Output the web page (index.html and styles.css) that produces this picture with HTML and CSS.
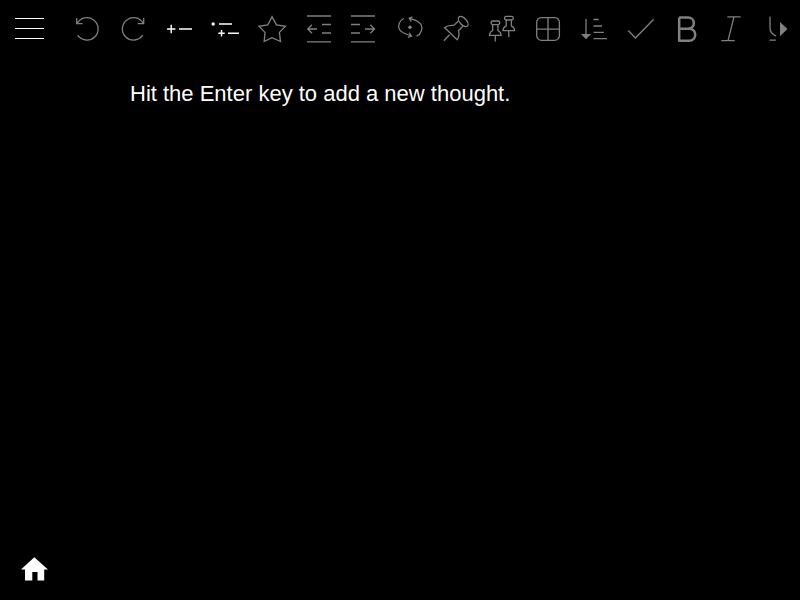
FILE: index.html
```html
<!DOCTYPE html>
<html lang="en">
<head>
<meta charset="utf-8">
<title>Thoughts</title>
<link rel="stylesheet" href="styles.css">
</head>
<body>
<header class="header">
  <svg class="menu" viewBox="0 0 64 60"><path d="M15 18.5H44M15 28.5H44M15 38.5H44"/></svg>
  <nav class="toolbar">
    <svg class="tool" viewBox="64 0 46 60"><path d="M77 23.7A11.2 11.2 0 1 1 77.7 35.2M76.7 18V23.7H82.5"/></svg>
    <svg class="tool" viewBox="110 0 46 60"><path d="M143.5 23.7A11.2 11.2 0 1 0 142.8 35.2M143.7 18V23.7H137.7"/></svg>
    <svg class="tool active" viewBox="156 0 46 60"><path d="M167 29H175.4M171.2 24.8V33.2M179 29H192"/></svg>
    <svg class="tool active" viewBox="202 0 46 60"><circle class="solid" cx="213.2" cy="24" r="1.7"/><path d="M219 24H232M218.3 33.3H224.7M221.5 30V36.6M228 33.3H239"/></svg>
    <svg class="tool" viewBox="248 0 46 60"><path d="M272 16.6L276.4 24.8L285.5 26.3L279.4 32.4L280.5 41.5L272 37.7L264.2 41.5L265 32.4L259 26.3L267.8 24.8Z"/></svg>
    <svg class="tool" viewBox="294 0 46 60"><path d="M307 16H331M307 41.8H331M322 24.5H331M322 33H331M317 29H307.8M312 24.8L307.8 29L312 33.2"/></svg>
    <svg class="tool" viewBox="340 0 46 60"><path d="M351 16H375M351 41.8H375M351 24.5H360M351 33H360M365 29H374.5M370.3 24.8L374.5 29L370.3 33.2"/></svg>
    <svg class="tool" viewBox="386 0 46 60"><circle class="solid" cx="410" cy="27.3" r="1.8"/><path d="M404 18.5C399 20.5 397.5 26 399.5 29.5C401.5 33 406 34.2 411.3 36M409.3 32.8L411.5 36.1L408 37.4M416.5 36.2C421.3 34 423.2 28.5 421 24.5C418.7 20.5 414 19.5 409.5 18.2M412.5 16.8L409.2 18.2L411.3 21.3"/></svg>
    <svg class="tool" viewBox="432 0 46 60"><ellipse cx="463.2" cy="21.5" rx="6.2" ry="3.3" transform="rotate(47 463.2 21.5)"/><path d="M458.4 21L453.8 25.4C450.3 25 447.1 25.4 444.6 27.8C448.8 31 452.8 36.3 457.3 39.7C459.1 37 459.4 34 458.6 30.5L463 26.2M449.6 34.8L443.8 40.7"/></svg>
    <svg class="tool" viewBox="478 0 46 60">
      <g id="push-pin"><rect x="491" y="21" width="8.8" height="3.6" rx="1.8"/><path d="M492.7 24.6V30.5C490.8 31.4 489.5 32.8 489.5 35.3H501.1C501.1 32.8 499.8 31.4 497.9 30.5V24.6M495.3 35.3V41.5"/></g>
      <use href="#push-pin" x="13.5" y="-4.6"/>
    </svg>
    <svg class="tool" viewBox="524 0 46 60"><rect x="536.7" y="17.6" width="22.7" height="22.7" rx="4.8"/><path d="M548 17.6V40.3M536.7 29.2H559.4"/></svg>
    <svg class="tool" viewBox="570 0 46 60"><path d="M586 19V35M593.5 19.5H598.7M593.5 26H602M593.5 32.3H604M593.5 38.6H607"/><path class="solid" d="M581 34H591L586 39.3Z"/></svg>
    <svg class="tool" viewBox="616 0 46 60"><path d="M628.3 30.5L635.4 38L653.7 19.3"/></svg>
    <svg class="tool" viewBox="662 0 46 60"><path class="bold" d="M679.2 17.5H688C695.8 17.5 695.8 28.7 688 28.7H679.2M688 28.7H689C697.3 28.7 697.3 40.7 689 40.7H679.2V17.5"/></svg>
    <svg class="tool" viewBox="708 0 46 60"><path d="M727.3 16.9H740.7M721.3 40.7H734.7M734 16.9L728 40.7"/></svg>
    <svg class="tool" viewBox="754 0 46 60"><path d="M770 16.7V28C770 32 772.5 34.5 776 35.8M769.5 40.2H776"/><path class="solid" d="M780 22L787.5 29L780 36.2Z"/></svg>
  </nav>
</header>
<main class="content"><p class="hint">Hit the Enter key to add a new thought.</p></main>
<footer class="footer">
  <svg class="home" viewBox="0 0 28 24"><path d="M13.3 0.2L27 12.6H23.2V23.6H16.5V15H11.3V23.6H4V12.6H0Z"/></svg>
</footer>
</body>
</html>
```
FILE: styles.css
```css
* { box-sizing: border-box; }
body {
  margin: 0;
  height: 100vh;
  display: flex;
  flex-direction: column;
  overflow: hidden;
  background: #000;
  color: #fff;
  font-family: "Liberation Sans", Arial, sans-serif;
}
.header, .toolbar { display: flex; }
.header { height: 60px; }
svg { display: block; flex: none; fill: none; }
.menu { width: 64px; height: 60px; stroke: #fff; stroke-width: 1; }
.tool {
  width: 46px;
  height: 60px;
  color: #808080;
  stroke: currentColor;
  stroke-width: 1.3;
}
.active { color: #fff; stroke-width: 1.4; }
.solid { fill: currentColor; stroke: none; }
.bold { stroke-width: 2.5; stroke-linejoin: round; }
.content { flex: 1; padding: 21px 130px 0; }
.hint { margin: 0; font-size: 22px; line-height: 25px; }
.footer { padding: 0 21px 19px; }
.home { width: 28px; height: 24px; fill: #fff; }
```
